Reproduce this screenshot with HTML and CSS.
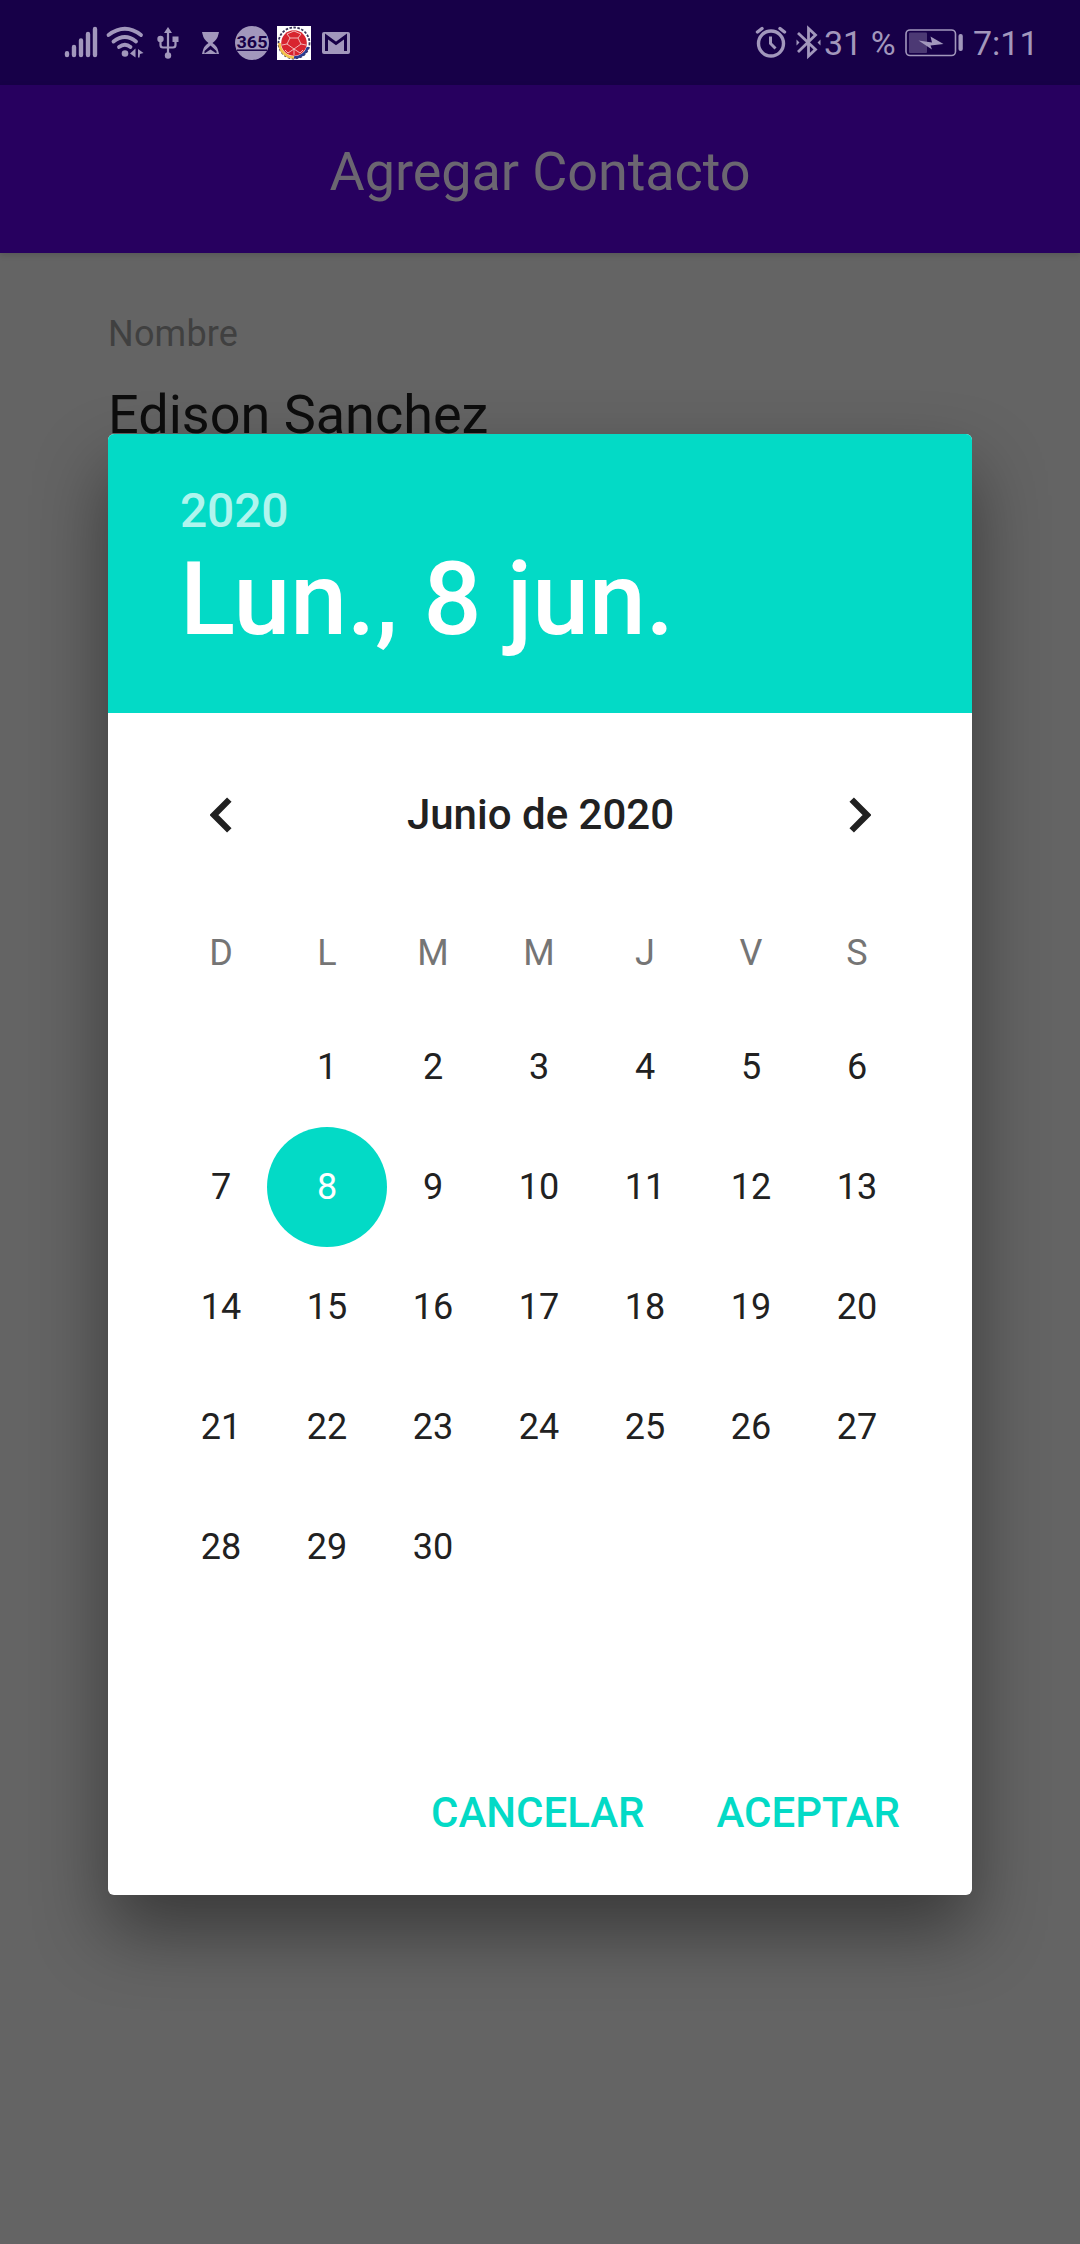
FILE: index.html
```html
<!DOCTYPE html>
<html lang="es">
<head>
<meta charset="utf-8">
<title>Agregar Contacto</title>
<link rel="stylesheet" href="styles.css">
</head>
<body>
<div class="screen">
  <header class="status">
    <svg class="status-icons" width="300" height="85" viewBox="60 0 300 85">
      <!-- signal -->
      <g stroke="currentColor" stroke-width="4.4" stroke-linecap="round">
        <path d="M67 53.3V55M74 47V55M81 40.500V55M88 34V55M95 29V55"/>
      </g>
      <!-- wifi -->
      <g fill="none" stroke="currentColor" stroke-width="3.8" stroke-linecap="round">
        <path d="M108.500 35Q125 22.500 141 35M113.500 41.500Q125 32.500 136 41.500M119 47Q125 42.500 130.500 47"/>
      </g>
      <circle cx="125" cy="53.500" r="3.300" fill="currentColor"/>
      <path d="M130 53.500l5.500-5v9zM138 49l5.500 4-3.500 1-.5 3.500h-1.500z" fill="currentColor"/>
      <!-- usb -->
      <g fill="none" stroke="currentColor" stroke-width="2.200">
        <path d="M168 31V55M160.500 40V45Q160.500 47.500 163 47.500H173Q175.500 47.500 175.500 45V40"/>
      </g>
      <g fill="currentColor">
        <path d="M168 27l4 6h-8z"/><circle cx="168" cy="55.500" r="3.200"/><circle cx="160.500" cy="39" r="3.200"/><rect x="172.500" y="36.500" width="6" height="5.500"/>
      </g>
      <!-- hourglass -->
      <path fill-rule="evenodd" fill="currentColor" d="M202 32H219L218.500 34Q217.500 39.500 212.500 43Q217.500 46 218.500 52L219 54H202L202.500 52Q203.500 46 208.500 43Q203.500 39.500 202.500 34ZM210.500 45.500L204.500 51V53.500L210.500 49.500L216.500 53.500V51Z"/>
      <!-- 365 -->
      <circle cx="252" cy="43" r="17" fill="currentColor"/>
      <g class="badge-digits">
        <text x="252" y="47.500" text-anchor="middle" textLength="31" lengthAdjust="spacingAndGlyphs">365</text>
        <path d="M237 50.200h30"/>
      </g>
      <!-- football crest -->
      <rect x="277" y="26" width="34" height="34" fill="#fff"/>
      <circle cx="294" cy="43" r="15.500" fill="none" stroke="#3b3659" stroke-width="1.800" stroke-dasharray="2.500 1.500"/>
      <path d="M279.500 43A14.500 14.500 0 0 0 294 57.500" fill="none" stroke="#f2c14a" stroke-width="2.600"/>
      <path d="M294 57.500A14.500 14.500 0 0 0 308 47" fill="none" stroke="#2a3b8f" stroke-width="2.600"/>
      <circle cx="294" cy="43" r="12.800" fill="#d8242f"/>
      <g fill="none" stroke="#f4c5c5" stroke-width=".9">
        <path d="M290 38h8l3 6-7 5-7-5zM290 38l-3-4 7-3 7 3-3 4M287 44l-5 1M301 44l5 1M294 49v6M285 50l3 3 6-4 6 4 3-3"/>
      </g>
      <!-- mail -->
      <rect x="322" y="32" width="28" height="22" rx="2" fill="currentColor"/>
      <path d="M326.500 51V36.500L336 43.500L345.500 36.500V51" fill="none" stroke="#170048" stroke-width="3"/>
    </svg>
    <div class="status-right">
      <svg width="69" height="85" viewBox="753 0 69 85" fill="none" stroke="currentColor">
        <circle cx="771" cy="43.500" r="12.500" stroke-width="3.400"/>
        <path d="M770.500 36.500V43.500L775.500 48.500" stroke-width="3"/>
        <path d="M757.500 32L762 28.500M784.500 32L780 28.500" stroke-width="3.400" stroke-linecap="round"/>
        <path d="M798 33L815.500 49.500L808.500 56V28.500L815.500 35L798 52" stroke-width="2.800"/>
        <path d="M796.500 39.500v6l3-3zM820.500 39.500v6l-3-3z" fill="currentColor" stroke="none"/>
      </svg>
      <span class="battery-text">31 %</span>
      <svg class="battery" width="60" height="85" viewBox="904 0 60 85">
        <rect x="906" y="30" width="49.500" height="25.500" rx="4" fill="none" stroke="currentColor" stroke-width="1.600"/>
        <rect x="909" y="32.500" width="18" height="20.500" rx="1" fill="currentColor" opacity=".38"/>
        <path d="M918.500 40.500L932 42.500L930.500 36.500L943.500 44L930.500 45.500L932 49.500Z" fill="currentColor"/>
        <rect x="958.500" y="34" width="4.300" height="17" rx="2" fill="currentColor"/>
      </svg>
      <span class="clock">7:11</span>
    </div>
  </header>
  <div class="appbar"><h1 class="title">Agregar Contacto</h1></div>
  <main class="form">
    <div class="label">Nombre</div>
    <div class="value">Edison Sanchez</div>
  </main>

  <section class="dialog">
    <div class="dialog-head">
      <div class="year">2020</div>
      <div class="date">Lun., 8 jun.</div>
    </div>
    <div class="month-nav">
      <svg width="22" height="36" viewBox="0 0 22 36"><path d="M19.300 2.600L4 18L19.300 33.400"/></svg>
      <span class="month">Junio de 2020</span>
      <svg width="22" height="36" viewBox="0 0 22 36"><path d="M2.700 2.600L18 18L2.700 33.400"/></svg>
    </div>
    <div class="grid weekdays"><span>D</span><span>L</span><span>M</span><span>M</span><span>J</span><span>V</span><span>S</span></div>
    <div class="grid days">
      <span></span><span>1</span><span>2</span><span>3</span><span>4</span><span>5</span><span>6</span>
      <span>7</span><span class="selected">8</span><span>9</span><span>10</span><span>11</span><span>12</span><span>13</span>
      <span>14</span><span>15</span><span>16</span><span>17</span><span>18</span><span>19</span><span>20</span>
      <span>21</span><span>22</span><span>23</span><span>24</span><span>25</span><span>26</span><span>27</span>
      <span>28</span><span>29</span><span>30</span>
    </div>
    <div class="actions"><span>CANCELAR</span><span>ACEPTAR</span></div>
  </section>
</div>
</body>
</html>
```
FILE: styles.css
```css
* { box-sizing: border-box; }
body { margin: 0; font-family: Roboto, sans-serif; }
.screen {
  position: relative;
  width: 1080px;
  height: 2244px;
  overflow: hidden;
  background: #646464;
}
.status {
  display: flex;
  justify-content: space-between;
  height: 85px;
  padding: 0 42px 0 60px;
  background: #170048;
  color: #a297bc;
}
.status-icons { display: block; }
.badge-digits { font: 700 17px Roboto, sans-serif; fill: #170048; stroke: none; }
.badge-digits path { stroke: #170048; stroke-width: 1.5; }
.status-right { display: flex; font-size: 34px; line-height: 86px; white-space: nowrap; }
.battery-text { width: 80px; margin-left: 2px; }
.clock { width: 65px; margin-left: 9px; }
.appbar {
  position: relative;
  height: 168px;
  background: #27005f;
  box-shadow: 0 2px 6px rgba(0, 0, 0, .14);
}
.title {
  margin: 0;
  padding-top: 3px;
  font-size: 54px;
  font-weight: 400;
  line-height: 168px;
  letter-spacing: -.1px;
  text-align: center;
  color: #6b6671;
}
.form { padding: 60px 108px 0; }
.label { font-size: 36px; line-height: 42px; letter-spacing: .2px; color: #404040; }
.value { margin-top: 28px; font-size: 54px; line-height: 64px; color: #0d0d0d; }

.dialog {
  position: absolute;
  left: 108px;
  top: 434px;
  width: 864px;
  height: 1461px;
  overflow: hidden;
  border-radius: 6px;
  background: #fff;
  box-shadow: 0 36px 72px rgba(0, 0, 0, .43);
}
.dialog-head { height: 279px; padding: 48px 72px 0; background: #03dac6; font-weight: 500; }
.year { font-size: 48px; line-height: 57px; letter-spacing: -.2px; color: #b0f5ee; }
.date { font-size: 102px; line-height: 120px; color: #fff; }
.month-nav {
  display: flex;
  align-items: center;
  justify-content: space-between;
  height: 203px;
  padding: 0 101px 0 102px;
  color: #212121;
}
.month-nav path { fill: none; stroke: currentColor; stroke-width: 6.3; }
.month { font-size: 42px; font-weight: 500; line-height: 50px; }
.grid {
  display: grid;
  grid-template-columns: repeat(7, 106px);
  margin-left: 60px;
  font-size: 36px;
  text-align: center;
  color: #212121;
}
.weekdays { height: 91px; line-height: 74px; color: #757575; }
.days { grid-auto-rows: 120px; line-height: 120px; }
.selected { width: 120px; margin-left: -7px; border-radius: 50%; background: #03dac6; color: #fff; }
.actions {
  display: flex;
  justify-content: flex-end;
  gap: 72px;
  margin-top: 181px;
  padding-right: 72px;
  font-size: 42px;
  font-weight: 500;
  line-height: 50px;
  color: #03dac6;
}
```
